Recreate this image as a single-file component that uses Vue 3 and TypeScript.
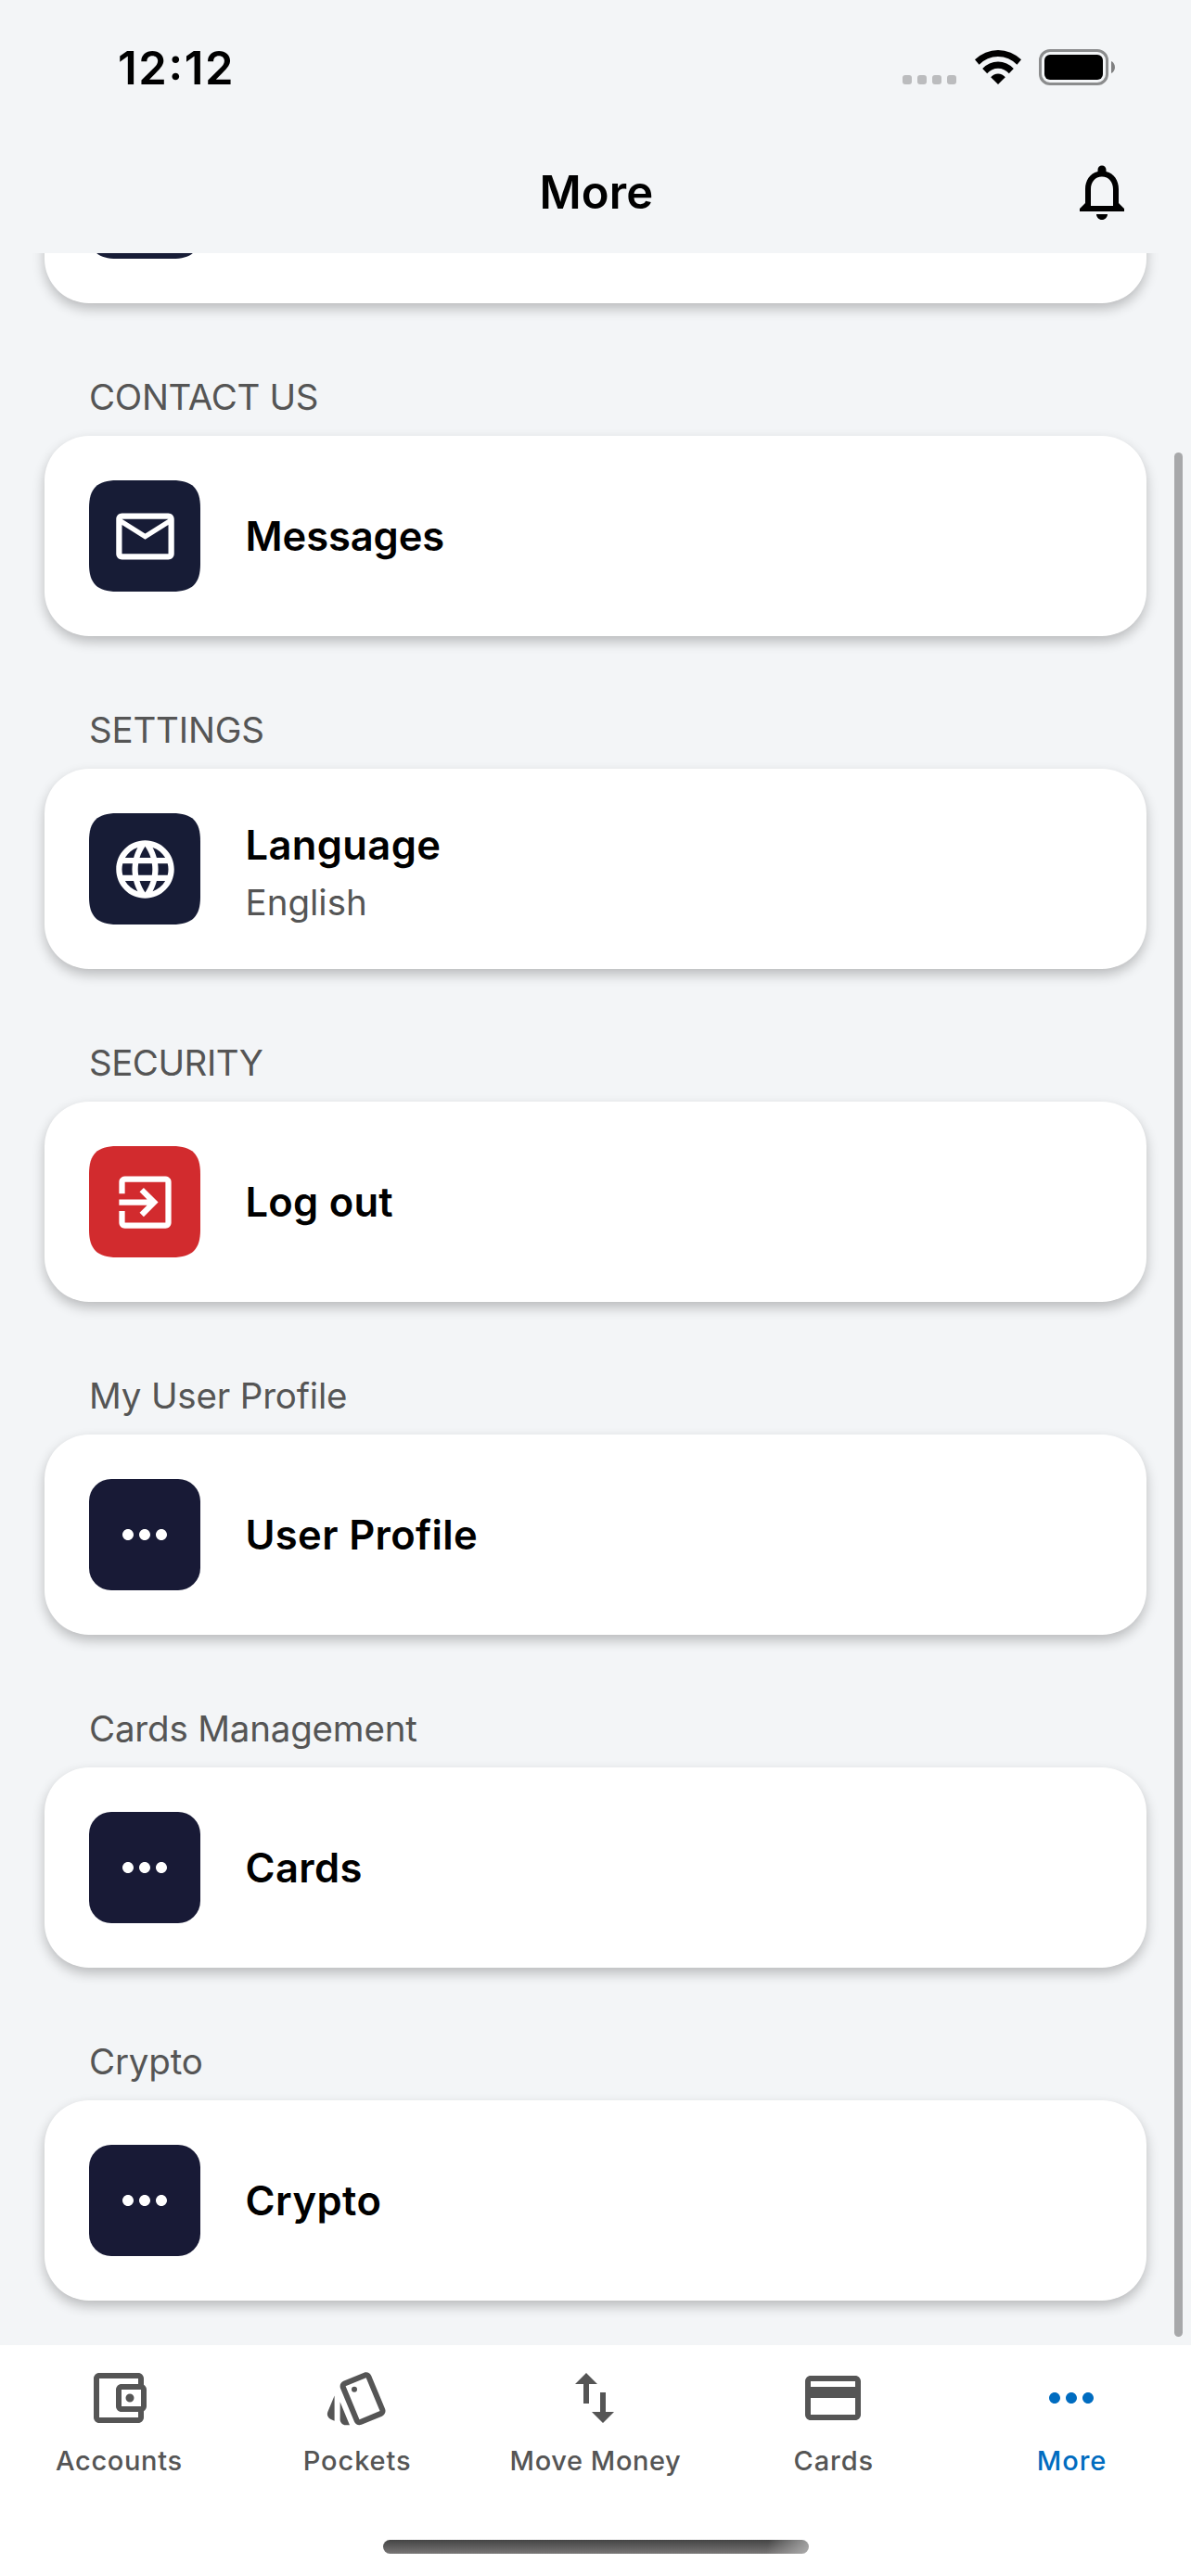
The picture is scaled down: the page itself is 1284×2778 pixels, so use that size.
<script setup lang="ts">
interface MenuItem {
  section: string
  sectionTracking: number
  title: string
  titleTracking: number
  subtitle?: string
  icon: keyof typeof glyphs
  tone: 'navy' | 'red' | 'ink'
}

interface Tab {
  label: string
  tracking: number
  icon: keyof typeof glyphs
  active?: boolean
}

const glyphs = {
  mail: 'M22 6c0-1.1-.9-2-2-2H4c-1.1 0-2 .9-2 2v12c0 1.1.9 2 2 2h16c1.1 0 2-.9 2-2V6zm-2 0l-8 5-8-5h16zm0 12H4V8l8 5 8-5v10z',
  globe:
    'M11.99 2C6.47 2 2 6.48 2 12s4.47 10 9.99 10C17.52 22 22 17.52 22 12S17.52 2 11.99 2zm6.93 6h-2.95c-.32-1.25-.78-2.45-1.38-3.56 1.84.63 3.37 1.91 4.33 3.56zM12 4.04c.83 1.2 1.48 2.53 1.91 3.96h-3.82c.43-1.43 1.08-2.76 1.91-3.96zM4.26 14C4.1 13.36 4 12.69 4 12s.1-1.36.26-2h3.38c-.08.66-.14 1.32-.14 2s.06 1.34.14 2H4.26zm.82 2h2.95c.32 1.25.78 2.45 1.38 3.56-1.84-.63-3.37-1.9-4.33-3.56zm2.95-8H5.08c.96-1.66 2.49-2.93 4.33-3.56C8.81 5.55 8.35 6.75 8.03 8zM12 19.96c-.83-1.2-1.48-2.53-1.91-3.96h3.82c-.43 1.43-1.08 2.76-1.91 3.96zM14.34 14H9.66c-.09-.66-.16-1.32-.16-2s.07-1.35.16-2h4.68c.09.65.16 1.32.16 2s-.07 1.34-.16 2zm.25 5.56c.6-1.11 1.06-2.31 1.38-3.56h2.95c-.96 1.65-2.49 2.93-4.33 3.56zM16.36 14c.08-.66.14-1.32.14-2s-.06-1.34-.14-2h3.38c.16.64.26 1.31.26 2s-.1 1.36-.26 2h-3.38z',
  exit: 'M10.09 15.59L11.5 17l5-5-5-5-1.41 1.41L12.67 11H3v2h9.67l-2.58 2.59zM19 3H5c-1.11 0-2 .9-2 2v4h2V5h14v14H5v-4H3v4c0 1.1.89 2 2 2h14c1.1 0 2-.9 2-2V5c0-1.1-.9-2-2-2z',
  dots: 'M6 10c-1.1 0-2 .9-2 2s.9 2 2 2 2-.9 2-2-.9-2-2-2zm12 0c-1.1 0-2 .9-2 2s.9 2 2 2 2-.9 2-2-.9-2-2-2zm-6 0c-1.1 0-2 .9-2 2s.9 2 2 2 2-.9 2-2-.9-2-2-2z',
  wallet:
    'M21 7.28V5c0-1.1-.9-2-2-2H5c-1.11 0-2 .9-2 2v14c0 1.1.89 2 2 2h14c1.1 0 2-.9 2-2v-2.28c.59-.35 1-.98 1-1.72V9c0-.74-.41-1.37-1-1.72zM20 9v6h-7V9h7zM5 19V5h14v2h-6c-1.1 0-2 .9-2 2v6c0 1.1.9 2 2 2h6v2H5zM16 10.5a1.5 1.5 0 1 0 0 3 1.5 1.5 0 1 0 0-3z',
  style:
    'M2.53 19.65l1.34.56v-9.03l-2.43 5.86c-.41 1.02.08 2.19 1.09 2.61zm19.5-3.7L17.07 3.98c-.31-.75-1.04-1.21-1.81-1.23-.26 0-.53.04-.79.15L7.1 5.95c-.75.31-1.21 1.03-1.23 1.8-.01.27.04.54.15.8l4.96 11.97c.31.76 1.05 1.22 1.83 1.23.26 0 .52-.05.77-.15l7.36-3.05c1.02-.42 1.51-1.59 1.09-2.6zm-9.2 3.8L7.87 7.79l7.35-3.04h.01l4.95 11.95-7.35 3.05zM11 7.95a1 1 0 1 0 0 2 1 1 0 1 0 0-2zM5.88 19.75c0 1.1.9 2 2 2h1.45l-3.45-8.34v6.34z',
  swap: 'M16 17.01V10h-2v7.01h-3L15 21l4-3.99h-3zM9 3L5 6.99h3V14h2V6.99h3L9 3z',
  card: 'M20 4H4c-1.11 0-1.99.89-1.99 2L2 18c0 1.11.89 2 2 2h16c1.11 0 2-.89 2-2V6c0-1.11-.89-2-2-2zm0 14H4v-6h16v6zm0-10H4V6h16v2z',
  bell: 'M12 22c1.1 0 2-.9 2-2h-4c0 1.1.9 2 2 2zm6-6v-5c0-3.07-1.63-5.64-4.5-6.32V4c0-.83-.67-1.5-1.5-1.5s-1.5.67-1.5 1.5v.68C7.64 5.36 6 7.92 6 11v5l-2 2v1h16v-1l-2-2zm-2 1H8v-6c0-2.48 1.51-4.5 4-4.5s4 2.02 4 4.5v6z',
}

const items: MenuItem[] = [
  { section: 'CONTACT US', sectionTracking: -0.34, title: 'Messages', titleTracking: -0.1, icon: 'mail', tone: 'navy' },
  { section: 'SETTINGS', sectionTracking: -0.2, title: 'Language', titleTracking: 0.36, subtitle: 'English', icon: 'globe', tone: 'navy' },
  { section: 'SECURITY', sectionTracking: -0.5, title: 'Log out', titleTracking: 0.25, icon: 'exit', tone: 'red' },
  { section: 'My User Profile', sectionTracking: -0.18, title: 'User Profile', titleTracking: 0.36, icon: 'dots', tone: 'ink' },
  { section: 'Cards Management', sectionTracking: -0.19, title: 'Cards', titleTracking: 0.4, icon: 'dots', tone: 'ink' },
  { section: 'Crypto', sectionTracking: -0.18, title: 'Crypto', titleTracking: 0.45, icon: 'dots', tone: 'ink' },
]

const tabs: Tab[] = [
  { label: 'Accounts', tracking: 0.67, icon: 'wallet' },
  { label: 'Pockets', tracking: 0.9, icon: 'style' },
  { label: 'Move Money', tracking: 0.59, icon: 'swap' },
  { label: 'Cards', tracking: 0.9, icon: 'card' },
  { label: 'More', tracking: 0.95, icon: 'dots', active: true },
]
</script>

<template>
  <div class="screen">
    <div class="status">
      <span class="time">12:12</span>
      <div class="indicators">
        <div class="signal"><i v-for="n in 4" :key="n"></i></div>
        <svg class="wifi" viewBox="0 0 50 37" width="50" height="37">
          <path d="M0 10.3A35.5 35.5 0 0 1 50 10.3L45.4 15.7A28 28 0 0 0 4.6 15.7Z" />
          <path d="M8.2 20A22.8 22.8 0 0 1 41.8 20L36.8 25.2A15.6 15.6 0 0 0 13.2 25.2Z" />
          <path d="M17.2 29.3A10 10 0 0 1 32.8 29.3L25 37Z" />
        </svg>
        <div class="battery">
          <div class="battery-body"><div class="battery-fill"></div></div>
          <svg viewBox="0 0 4 13" width="4" height="13"><path d="M0 0C5.3 2.2 5.3 10.8 0 13Z" /></svg>
        </div>
      </div>
    </div>

    <header class="header">
      <h1>More</h1>
      <svg class="bell" viewBox="0 0 24 24"><path :d="glyphs.bell" /></svg>
    </header>

    <main class="list">
      <div class="card card-first">
        <div class="tile smooth navy"></div>
      </div>
      <section v-for="item in items" :key="item.section">
        <h2 :style="{ letterSpacing: item.sectionTracking + 'px' }">{{ item.section }}</h2>
        <div class="card">
          <div class="tile" :class="[item.tone, { smooth: item.tone !== 'ink' }]">
            <svg viewBox="0 0 24 24"><path :d="glyphs[item.icon]" /></svg>
          </div>
          <div class="copy">
            <div class="title" :style="{ letterSpacing: item.titleTracking + 'px' }">{{ item.title }}</div>
            <div v-if="item.subtitle" class="subtitle">{{ item.subtitle }}</div>
          </div>
        </div>
      </section>
      <div class="scroll-thumb"></div>
    </main>

    <footer class="footer">
      <nav class="tabs">
        <div v-for="tab in tabs" :key="tab.label" class="tab" :class="{ active: tab.active }">
          <svg viewBox="0 0 24 24"><path :d="glyphs[tab.icon]" /></svg>
          <span :style="{ letterSpacing: tab.tracking + 'px' }">{{ tab.label }}</span>
        </div>
      </nav>
      <div class="home-indicator"></div>
    </footer>
  </div>
</template>

<style>
body {
  margin: 0;
  background: #f3f5f7;
}
</style>

<style scoped>
.screen {
  display: flex;
  flex-direction: column;
  width: 1284px;
  height: 2778px;
  overflow: hidden;
  background: #f3f5f7;
  color: #000;
  font-family: Inter, 'Liberation Sans', sans-serif;
}

svg {
  display: block;
  fill: currentColor;
}

/* Status bar */
.status {
  display: flex;
  flex: none;
  align-items: center;
  justify-content: space-between;
  box-sizing: border-box;
  height: 141px;
  padding: 4px 82px 0 127px;
}

.time {
  padding-top: 2px;
  font-size: 49px;
  font-weight: 600;
  line-height: 60px;
  letter-spacing: 1.6px;
  font-feature-settings: 'case';
}

.indicators {
  display: flex;
  align-items: center;
}

.signal {
  display: flex;
  gap: 6px;
  margin: 26px 20px 0 0;
}

.signal i {
  width: 10px;
  height: 10px;
  border-radius: 3px;
  background: #bbbcbe;
}

.wifi {
  margin-right: 19px;
}

.battery {
  display: flex;
  align-items: center;
  gap: 3px;
  color: #7f8081;
}

.battery-body {
  box-sizing: border-box;
  width: 75px;
  height: 39px;
  padding: 3px;
  border: 3px solid #8b8c8d;
  border-radius: 12px;
}

.battery-fill {
  height: 27px;
  border-radius: 6px;
  background: #000;
}

/* Header */
.header {
  display: grid;
  flex: none;
  grid-template-columns: 72px 1fr 72px;
  align-items: center;
  height: 132px;
  padding: 0 60px;
}

.header h1 {
  grid-column: 2;
  margin: 0;
  padding: 2px 0 0 2px;
  font-size: 49px;
  font-weight: 600;
  line-height: 60px;
  letter-spacing: 0.15px;
  text-align: center;
}

.bell {
  width: 72px;
  height: 72px;
}

/* List */
.list {
  position: relative;
  flex: 1;
  min-height: 0;
  padding: 0 48px;
  overflow: hidden;
}

.card {
  display: flex;
  align-items: center;
  box-sizing: border-box;
  height: 216px;
  padding: 0 48px;
  border-radius: 48px;
  background: #fff;
  box-shadow: 0 6px 13px rgba(0, 0, 0, 0.24);
}

.card-first {
  margin-top: -162px;
}

section h2 {
  box-sizing: border-box;
  height: 143px;
  margin: 0;
  padding: 75px 48px 0;
  color: #555;
  font-size: 38.5px;
  font-weight: 400;
  line-height: 52px;
  white-space: nowrap;
}

.tile {
  display: flex;
  flex: none;
  align-items: center;
  justify-content: center;
  width: 120px;
  height: 120px;
  border-radius: 24px;
  color: #fff;
}

.tile svg {
  width: 72px;
  height: 72px;
}

.tile.smooth {
  border-radius: 0;
  clip-path: path('M0 30C0 8.7 8.7 0 30 0H90C111.3 0 120 8.7 120 30V90C120 111.3 111.3 120 90 120H30C8.7 120 0 111.3 0 90Z');
}

.tile.smooth svg {
  width: 75px;
  height: 75px;
}

.navy {
  background: #171c36;
}

.red {
  background: #d22b2e;
}

.ink {
  background: #181a36;
}

.copy {
  margin-left: 48.5px;
  white-space: nowrap;
}

.title {
  font-size: 43.5px;
  font-weight: 600;
  line-height: 72px;
}

.subtitle {
  color: #555;
  font-size: 38.5px;
  line-height: 52px;
}

.scroll-thumb {
  position: absolute;
  top: 215px;
  right: 9px;
  width: 9px;
  height: 2032px;
  border-radius: 4.5px;
  background: #a7a8aa;
}

/* Bottom navigation */
.footer {
  display: flex;
  flex: none;
  flex-direction: column;
  align-items: center;
  justify-content: space-between;
  box-sizing: border-box;
  height: 249px;
  padding: 21px 0 24px;
  background: #fff;
}

.tabs {
  display: grid;
  grid-template-columns: repeat(5, 1fr);
  width: 100%;
}

.tab {
  display: flex;
  flex-direction: column;
  align-items: center;
  color: #555;
}

.tab svg {
  width: 72px;
  height: 72px;
  margin-right: 1px;
}

.tab span {
  margin-top: 14px;
  font-size: 29px;
  font-weight: 500;
  line-height: 36px;
  white-space: nowrap;
}

.tab.active {
  color: #006cc0;
}

.home-indicator {
  width: 459px;
  height: 15px;
  border-radius: 7.5px;
  background:
    linear-gradient(100deg, transparent 90%, rgba(190, 190, 190, 0.75) 100%),
    linear-gradient(#444, #787676);
}
</style>
